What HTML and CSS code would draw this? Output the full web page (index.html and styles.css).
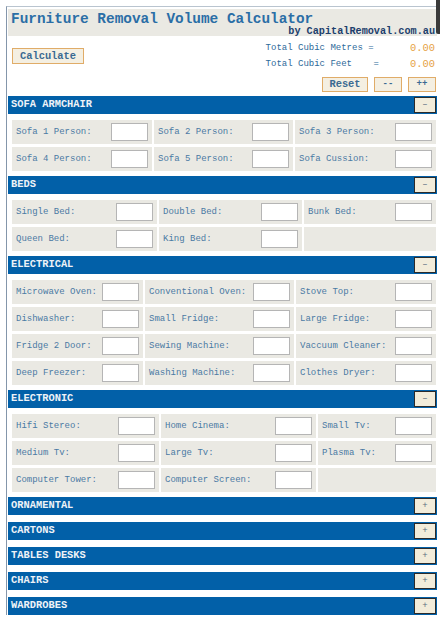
FILE: index.html
```html
<!DOCTYPE html>
<html lang="en">
<head>
  <meta charset="UTF-8">
  <title>Furniture Removal Volume Calculator</title>
  <link rel="stylesheet" href="styles.css">
</head>
<body>
  <div class="calculator">
    <div class="title-bar">
      <h1>Furniture Removal Volume Calculator</h1>
      <div class="byline">by CapitalRemoval.com.au</div>
    </div>

    <div class="totals-area">
      <button type="button" class="btn btn-calc">Calculate</button>
      <div class="totals">
        <span class="total-label">Total Cubic Metres =</span>
        <span class="total-value">0.00</span>
        <span class="total-label">Total Cubic Feet    =</span>
        <span class="total-value">0.00</span>
      </div>
    </div>
    <div class="action-row">
      <button type="button" class="btn btn-reset">Reset</button>
      <button type="button" class="btn btn-small">--</button>
      <button type="button" class="btn btn-small">++</button>
    </div>

    <!-- Sofa -->
    <div class="section">
      <div class="section-head"><span>SOFA ARMCHAIR</span><button type="button" class="toggle">&ndash;</button></div>
      <div class="section-body cols-sofa">
        <div class="cell"><label>Sofa 1 Person:</label><input type="text"></div>
        <div class="cell"><label>Sofa 2 Person:</label><input type="text"></div>
        <div class="cell"><label>Sofa 3 Person:</label><input type="text"></div>
        <div class="cell"><label>Sofa 4 Person:</label><input type="text"></div>
        <div class="cell"><label>Sofa 5 Person:</label><input type="text"></div>
        <div class="cell"><label>Sofa Cussion:</label><input type="text"></div>
      </div>
    </div>

    <!-- Beds -->
    <div class="section">
      <div class="section-head"><span>BEDS</span><button type="button" class="toggle">&ndash;</button></div>
      <div class="section-body cols-beds">
        <div class="cell"><label>Single Bed:</label><input type="text"></div>
        <div class="cell"><label>Double Bed:</label><input type="text"></div>
        <div class="cell"><label>Bunk Bed:</label><input type="text"></div>
        <div class="cell"><label>Queen Bed:</label><input type="text"></div>
        <div class="cell"><label>King Bed:</label><input type="text"></div>
        <div class="cell"></div>
      </div>
    </div>

    <!-- Electrical -->
    <div class="section">
      <div class="section-head"><span>ELECTRICAL</span><button type="button" class="toggle">&ndash;</button></div>
      <div class="section-body cols-electrical">
        <div class="cell"><label>Microwave Oven:</label><input type="text"></div>
        <div class="cell"><label>Conventional Oven:</label><input type="text"></div>
        <div class="cell"><label>Stove Top:</label><input type="text"></div>
        <div class="cell"><label>Dishwasher:</label><input type="text"></div>
        <div class="cell"><label>Small Fridge:</label><input type="text"></div>
        <div class="cell"><label>Large Fridge:</label><input type="text"></div>
        <div class="cell"><label>Fridge 2 Door:</label><input type="text"></div>
        <div class="cell"><label>Sewing Machine:</label><input type="text"></div>
        <div class="cell"><label>Vaccuum Cleaner:</label><input type="text"></div>
        <div class="cell"><label>Deep Freezer:</label><input type="text"></div>
        <div class="cell"><label>Washing Machine:</label><input type="text"></div>
        <div class="cell"><label>Clothes Dryer:</label><input type="text"></div>
      </div>
    </div>

    <!-- Electronic -->
    <div class="section">
      <div class="section-head"><span>ELECTRONIC</span><button type="button" class="toggle">&ndash;</button></div>
      <div class="section-body cols-electronic">
        <div class="cell"><label>Hifi Stereo:</label><input type="text"></div>
        <div class="cell"><label>Home Cinema:</label><input type="text"></div>
        <div class="cell"><label>Small Tv:</label><input type="text"></div>
        <div class="cell"><label>Medium Tv:</label><input type="text"></div>
        <div class="cell"><label>Large Tv:</label><input type="text"></div>
        <div class="cell"><label>Plasma Tv:</label><input type="text"></div>
        <div class="cell"><label>Computer Tower:</label><input type="text"></div>
        <div class="cell"><label>Computer Screen:</label><input type="text"></div>
        <div class="cell"></div>
      </div>
    </div>

    <!-- Collapsed sections -->
    <div class="section collapsed">
      <div class="section-head"><span>ORNAMENTAL</span><button type="button" class="toggle">+</button></div>
    </div>
    <div class="section collapsed">
      <div class="section-head"><span>CARTONS</span><button type="button" class="toggle">+</button></div>
    </div>
    <div class="section collapsed">
      <div class="section-head"><span>TABLES DESKS</span><button type="button" class="toggle">+</button></div>
    </div>
    <div class="section collapsed">
      <div class="section-head"><span>CHAIRS</span><button type="button" class="toggle">+</button></div>
    </div>
    <div class="section collapsed">
      <div class="section-head"><span>WARDROBES</span><button type="button" class="toggle">+</button></div>
    </div>
  </div>

  <div class="corner-tab"></div>
</body>
</html>
```

FILE: styles.css
```css
body {
  margin: 0;
  background: #ffffff;
  font-family: "Liberation Mono", "Courier New", monospace;
}
.calculator {
  margin: 6px 0 0 6px;
  width: 429px;
  border-left: 1px solid #8496ab;
  border-top: 1px solid #b9c4cf;
  padding: 2px 0 0 1px;
}

/* title */
.title-bar {
  background: #eae9e3;
  height: 27px;
  box-sizing: border-box;
  padding: 4px 0 0 3px;
}
.title-bar h1 {
  margin: 0;
  font-size: 14.4px;
  line-height: 13px;
  font-weight: bold;
  color: #2a6ea6;
}
.byline {
  text-align: right;
  white-space: nowrap;
  font-size: 10.2px;
  line-height: 11px;
  font-weight: bold;
  color: #1d3f6d;
  margin-right: 2px;
}

/* totals */
.totals-area {
  display: flex;
  justify-content: space-between;
  align-items: center;
  padding: 4px 2px 0 4px;
}
.totals {
  display: grid;
  grid-template-columns: auto 56px;
  line-height: 16px;
}
.total-label {
  white-space: pre;
  font-size: 9px;
  color: #2e6a9a;
}
.total-value {
  text-align: right;
  font-size: 10.4px;
  color: #e6a244;
}

.btn {
  font-family: "Liberation Mono", "Courier New", monospace;
  font-weight: bold;
  font-size: 10.4px;
  color: #3b6a92;
  background: #f4efe2;
  border: 1px solid #e0ac68;
  padding: 0;
  margin: 0;
  height: 16px;
  line-height: 14px;
  cursor: pointer;
}
.btn-calc {
  width: 72px;
}
.action-row {
  display: flex;
  justify-content: flex-end;
  gap: 6px;
  margin: 5px 1px 4px 0;
}
.action-row .btn {
  height: 15px;
  line-height: 13px;
}
.btn-reset {
  width: 46px;
}
.btn-small {
  width: 28px;
  font-size: 9px;
}

/* sections */
.section {
  margin-bottom: 5px;
}
.section.collapsed {
  margin-bottom: 7px;
}
.section-head {
  height: 18px;
  background: #0260a8;
  display: flex;
  justify-content: space-between;
  align-items: center;
  padding-left: 3px;
  color: #eef2f7;
  font-size: 10.4px;
  font-weight: bold;
}
.section-head span {
  margin-top: -3px;
}
.toggle {
  width: 22px;
  height: 16px;
  margin-right: 1px;
  padding: 0;
  border: 1px solid #2b2b2b;
  background: #f2ecda;
  color: #5d6e80;
  font-family: "Liberation Mono", "Courier New", monospace;
  font-size: 9px;
  line-height: 13px;
}
.section-body {
  display: grid;
  gap: 3px 2px;
  padding: 6px 1px 0 4px;
}
.cols-sofa { grid-template-columns: 140px 139px 141px; }
.cols-beds { grid-template-columns: 145px 143px 132px; }
.cols-electrical { grid-template-columns: 131px 149px 140px; }
.cols-electronic { grid-template-columns: 147px 155px 118px; }

.cell {
  height: 24px;
  background: #eae9e3;
  display: flex;
  justify-content: space-between;
  align-items: center;
  padding: 0 4px;
}
.cell label {
  font-size: 9px;
  color: #4b7aa3;
  white-space: nowrap;
}
.cell input {
  width: 37px;
  height: 18px;
  box-sizing: border-box;
  border: 1px solid #b5b5b5;
  background: #ffffff;
  margin: 0;
  padding: 0;
}

.corner-tab {
  position: absolute;
  top: 0;
  right: 0;
  width: 4px;
  height: 34px;
  background: #3a3a3a;
  border-bottom-left-radius: 2px;
}
```
